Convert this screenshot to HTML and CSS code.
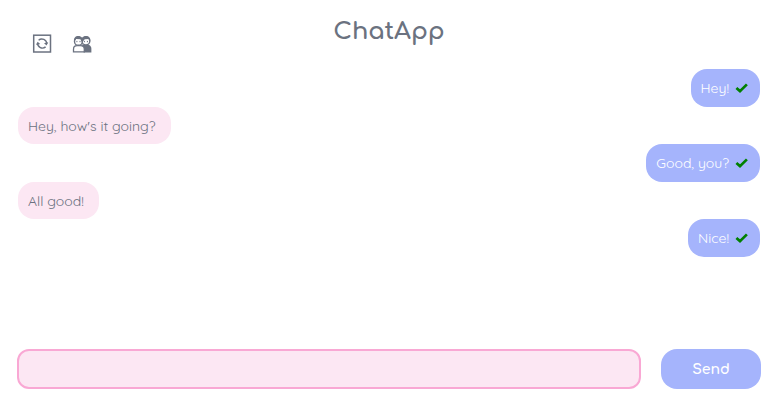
FILE: index.html
```html
<!DOCTYPE html>
<html lang="en">
<head>
<meta charset="utf-8">
<meta name="viewport" content="width=device-width, initial-scale=1">
<title>ChatApp</title>
<link rel="stylesheet" href="styles.css">
</head>
<body>
<header class="header">
  <nav class="tools">
    <button class="tool" type="button" aria-label="Refresh">
      <svg viewBox="0 0 20 20" width="20" height="20" fill="none" stroke="currentColor">
        <rect x="1.7" y="1.2" width="16.8" height="16.8" stroke-width="1.5"/>
        <path d="M6.6 6.2A4.9 4.9 0 0 1 14.7 10M13.6 12.9A4.9 4.9 0 0 1 5.5 9.1" stroke-width="1.4"/>
        <path d="M16.2 8.2l-1.6 3.2-2.6-2.2zM4 10.9l1.6-3.2 2.6 2.2z" fill="currentColor" stroke="none"/>
      </svg>
    </button>
    <button class="tool" type="button" aria-label="People">
      <svg viewBox="0 0 20 20" width="20" height="20" fill="none" stroke="currentColor">
        <path d="M10 10.5h5.2c2.5 0 4.2 1.8 4.2 4.2v3.7h-7.8z" fill="currentColor" stroke="none"/>
        <path d="M1.5 17.8v-2.6c0-2.2 1.5-3.5 3.6-3.5h3.5c2.2 0 3.7 1.3 3.7 3.5v2.6z" fill="#fff" stroke-width="1.3"/>
        <circle cx="13.9" cy="7.1" r="3.9" fill="#fff" stroke-width="1.4"/>
        <circle cx="6.4" cy="7.4" r="3.9" fill="#fff" stroke-width="1.4"/>
        <path d="M2 7.4C1.5 3.9 3.4 2 6.4 2c1.6 0 2.8.6 3.7 1.7C11 2.6 12.3 2 13.9 2c3 0 5 2 4.3 5.4L16.5 5l-3.8.2-2.6 3.4L8.4 5.2 4.2 5z" fill="currentColor" stroke="none"/>
        <path d="M4.9 6.9v1.3M8 6.9v1.3M12.4 6.9v1.3M15.4 6.9v1.3" stroke-width="1"/>
      </svg>
    </button>
  </nav>
  <h1 class="title">ChatApp</h1>
</header>
<main class="messages">
  <p class="bubble sent">Hey! <svg class="check" viewBox="0 0 13 10" width="13" height="10"><path d="M1.4 4.9l3.6 3.2L11.9 1.4"/></svg></p>
  <p class="bubble received">Hey, how's it going?</p>
  <p class="bubble sent">Good, you? <svg class="check" viewBox="0 0 13 10" width="13" height="10"><path d="M1.4 4.9l3.6 3.2L11.9 1.4"/></svg></p>
  <p class="bubble received">All good!</p>
  <p class="bubble sent">Nice! <svg class="check" viewBox="0 0 13 10" width="13" height="10"><path d="M1.4 4.9l3.6 3.2L11.9 1.4"/></svg></p>
</main>
<form class="composer">
  <input class="entry" type="text" aria-label="Message">
  <button class="send" type="button">Send</button>
</form>
</body>
</html>
```
FILE: styles.css
```css
* { box-sizing: border-box; }

body {
  margin: 0;
  min-height: 100vh;
  padding: 0 15px 16px 17px;
  display: flex;
  flex-direction: column;
  background: #fff;
  color: #6b7280;
  font-family: Quicksand, Lato, sans-serif;
  font-size: 14px;
}

.header {
  display: grid;
  grid-template-columns: 1fr auto 1fr;
  height: 69px;
}

.tools {
  display: flex;
  gap: 20px;
  padding: 34px 0 0 15px;
}

.tool {
  width: 20px;
  height: 20px;
  padding: 0;
  border: 0;
  background: none;
  color: inherit;
}

.tool svg { display: block; }

.title {
  margin: 0;
  padding-top: 16px;
  font-family: Comfortaa, Lato, sans-serif;
  font-size: 24px;
  line-height: 32px;
  font-weight: 700;
}

.messages {
  flex: 1;
  display: flex;
  flex-direction: column;
  padding: 0 1px;
}

.bubble {
  display: flex;
  align-items: center;
  margin: 0;
  border-radius: 16px;
  line-height: 18px;
}

.received {
  align-self: flex-start;
  padding: 10px 15px 9px 10px;
  background: #fce7f3;
}

.sent {
  align-self: flex-end;
  gap: 6px;
  padding: 10px 12px 10px 10px;
  background: #a5b4fc;
  color: #fff;
}

.check {
  fill: none;
  stroke: green;
  stroke-width: 2.7;
}

.composer {
  display: flex;
  gap: 20px;
}

.entry {
  flex: 1;
  min-width: 0;
  height: 40px;
  padding: 0 10px;
  border: 2px solid #f9a8d4;
  border-radius: 12px;
  background: #fce7f3;
  color: inherit;
  font: inherit;
}

.send {
  width: 100px;
  height: 40px;
  padding: 0;
  border: 0;
  border-radius: 16px;
  background: #a5b4fc;
  color: #fff;
  font-family: Comfortaa, Lato, sans-serif;
  font-size: 14px;
  font-weight: 700;
}
```
